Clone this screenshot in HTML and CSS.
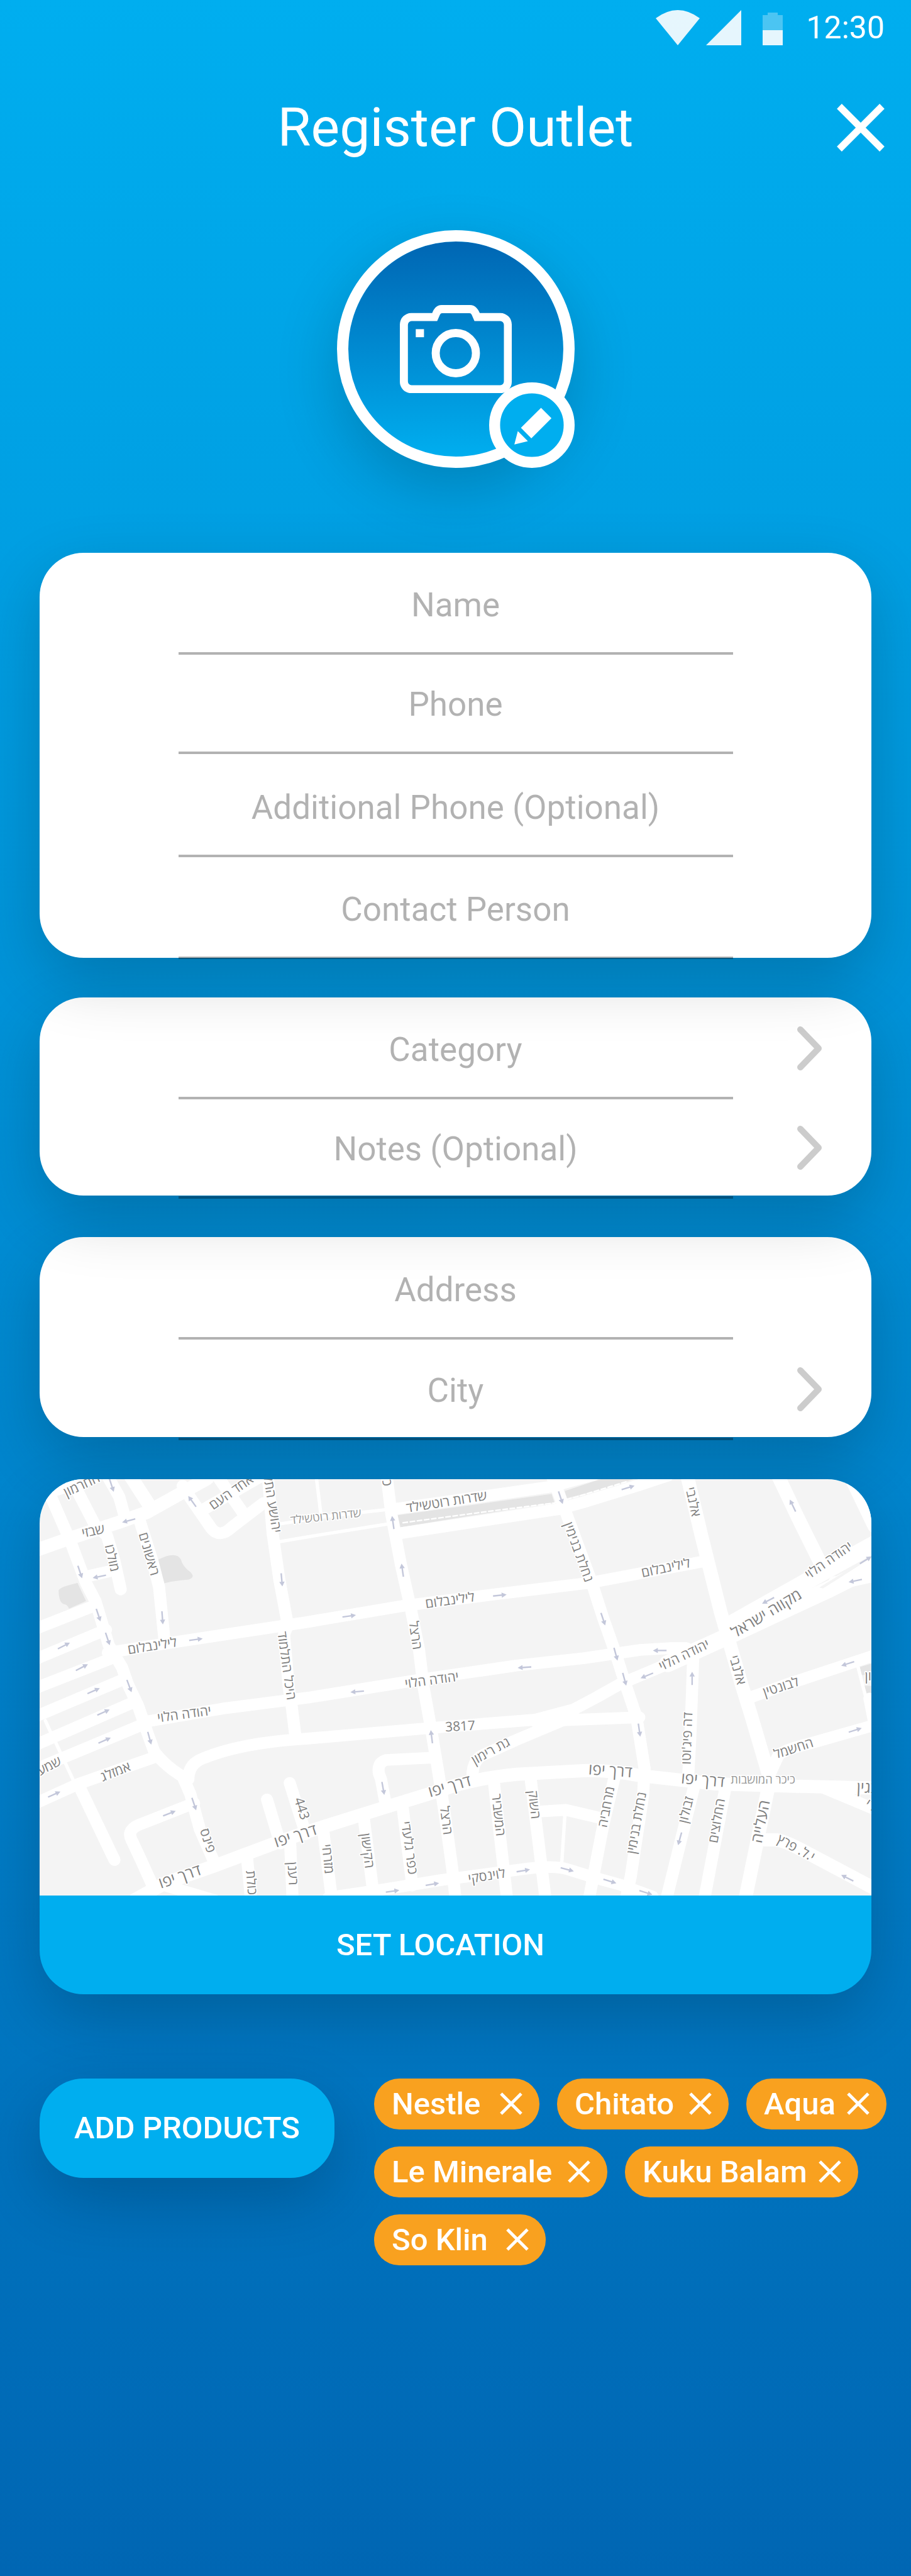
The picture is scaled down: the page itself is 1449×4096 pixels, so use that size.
FILE: index.html
```html
<!DOCTYPE html>
<html lang="en">
<head>
<meta charset="utf-8">
<meta name="viewport" content="width=device-width, initial-scale=1">
<title>Register Outlet</title>
<link rel="stylesheet" href="styles.css">
</head>
<body>
<div class="screen">
  <div class="status-bar">
    <svg class="status-wifi" viewBox="0 0 70 56" aria-hidden="true"><path d="M0 13Q35 -13 70 13L35 56Z"/></svg>
    <svg class="status-signal" viewBox="0 0 56 56" aria-hidden="true"><path d="M56 0V56H0Z"/></svg>
    <svg class="status-battery" viewBox="0 0 32 52" aria-hidden="true"><path opacity=".33" d="M8 0H24V4H32V28H0V4H8Z"/><path d="M0 28H32V52H0Z"/></svg>
    <time class="status-time">12:30</time>
  </div>

  <header class="header">
    <h1 class="title">Register Outlet</h1>
    <button class="close" type="button" aria-label="Close"><svg viewBox="0 0 78 78" aria-hidden="true"><path d="M5 5L73 73M73 5L5 73"/></svg></button>
  </header>

  <form class="form">
    <button class="avatar" type="button" aria-label="Change outlet photo">
      <svg class="avatar-camera" viewBox="384 460 612 482" aria-hidden="true">
        <path fill-rule="evenodd" d="M446 504H561C570 480 585 460 612 460H768C795 460 812 482 821 504H934A62 62 0 0 1 996 566V880A62 62 0 0 1 934 942H446A62 62 0 0 1 384 880V566A62 62 0 0 1 446 504ZM448 548A20 20 0 0 0 428 568V878A20 20 0 0 0 448 898H933A20 20 0 0 0 953 878V568A20 20 0 0 0 933 548H792L777 513Q773 505 765 505H615Q607 505 603 513L588 548Z"/>
        <path d="M471 592H516V636H471Z"/>
        <circle cx="690" cy="723" r="110"/>
      </svg>
      <svg class="avatar-badge" viewBox="870 882 468 468" aria-hidden="true">
        <circle cx="1104" cy="1116" r="204"/>
        <path d="M1154 1021L1211 1078L1101 1188L1044 1131ZM1027 1149L1082 1204L1008 1222Z"/>
      </svg>
    </button>

    <section class="card card-contact">
      <input class="field" type="text" placeholder="Name" aria-label="Name">
      <input class="field" type="tel" placeholder="Phone" aria-label="Phone">
      <input class="field" type="tel" placeholder="Additional Phone (Optional)" aria-label="Additional Phone (Optional)">
      <input class="field" type="text" placeholder="Contact Person" aria-label="Contact Person">
    </section>

    <section class="card card-details">
      <button class="picker" type="button"><span class="field">Category</span><svg class="chevron" viewBox="0 0 40 70" aria-hidden="true"><path d="M5 5L34 35L5 65"/></svg></button>
      <button class="picker" type="button"><span class="field">Notes (Optional)</span><svg class="chevron" viewBox="0 0 40 70" aria-hidden="true"><path d="M5 5L34 35L5 65"/></svg></button>
    </section>

    <section class="card card-address">
      <input class="field" type="text" placeholder="Address" aria-label="Address">
      <button class="picker" type="button"><span class="field">City</span><svg class="chevron" viewBox="0 0 40 70" aria-hidden="true"><path d="M5 5L34 35L5 65"/></svg></button>
    </section>

    <section class="card card-map">
      <svg class="map" viewBox="72 2688 1512 756" preserveAspectRatio="xMidYMid slice" role="img" aria-label="Street map">
        <defs>
          <g id="way"><path class="arrow-line" d="M-36 0H12"/><path class="arrow-head" d="M10 -14L36 0L10 14Z"/></g>
        </defs>
        <g transform="translate(60 2670) scale(.34439 .33333)">
          <!-- squares and gardens -->
          <g class="block">
            <path d="M655 495L700 475Q760 455 780 490Q790 530 830 560Q860 590 820 602Q760 605 690 622Z"/>
            <path d="M135 660Q145 640 235 620L280 718L190 760Q180 735 160 735Q135 720 135 660Z"/>
            <path d="M1925 250L2737 135L2752 180L1940 316ZM2807 118L2960 66L3010 50H3180L3020 105L2817 158Z"/>
            <path d="M4364 1078L4440 1055V1118L4375 1122ZM4384 1180H4440V1232H4404Z"/>
          </g>
          <!-- streets -->
          <g class="road">
            <path class="wide" d="M20 440L170 385L450 290L600 235L800 120L920 50"/>
            <path class="wide" d="M20 150L120 110L330 40"/>
            <path d="M95 150L200 400L280 620L330 720L400 960L470 1080L500 1170L555 1290L605 1440L640 1540Q700 1620 790 1675L830 1770L880 1960L960 2150"/>
            <path d="M235 120L330 310L390 360L430 500L463 655"/>
            <path d="M280 585L430 550"/>
            <path d="M395 40L455 150L485 260"/>
            <path class="wide" d="M510 30L610 190"/>
            <path d="M560 270L630 500L665 640L695 940"/>
            <path d="M790 90L830 155L940 320Q985 380 1050 315L1215 185"/>
            <path d="M890 225L1200 40"/>
            <path d="M975 40L1110 240"/>
            <path d="M1240 40L1265 350L1300 600L1345 850L1325 900L1350 1190L1365 1290L1385 1455"/>
            <path class="lane" d="M1495 40L1520 250"/>
            <path class="lane" d="M1290 300L1560 255L1880 218"/>
            <path class="lane" d="M1300 395L1452 368L1890 295"/>
            <path d="M395 1000L700 950L1452 832L1952 745L2452 680L2932 620L3524 505"/>
            <path d="M1867 40L1892 250L1942 520L1992 750L2037 980L2062 1190L2102 1420L2142 1670L2172 1870L2212 2170L2230 2340"/>
            <path d="M1900 218L2732 95L2960 30"/>
            <path d="M1942 348L2772 218L2904 180L3204 85L3350 35"/>
            <path class="dash" d="M1950 292L2400 230L2750 184L2870 150L3140 65"/>
            <path d="M2740 40L2800 200L2950 620L3009 810L3074 1000L3130 1180L3185 1350L3228 1630L3220 1780L3155 2220L3130 2340"/>
            <path d="M600 1375L1000 1305L1452 1245L2052 1145L2552 1070L2904 1030L3204 985L3364 975L3450 975"/>
            <path class="avenue" d="M4440 408L4180 555L3664 855"/>
            <path class="avenue" d="M4460 520L4200 655L3700 895L3350 1060"/>
            <path d="M3400 1040L3100 1170L2980 1240L2852 1310L2652 1365L2102 1410L1452 1468Q1100 1490 900 1575Q820 1605 820 1690"/>
            <path d="M2652 1375L2852 1366L3200 1352"/>
            <path d="M2852 1345L2552 1475L2370 1560Q2319 1590 2319 1680"/>
            <path d="M4440 582L4270 620L4230 615"/>
            <path class="wide" d="M3454 40L3530 370L3630 780L3680 960L3745 1190L3790 1340L3870 1620L3890 1700"/>
            <path class="wide" d="M3930 30L4040 270L4160 520"/>
            <path class="wide" d="M4310 30L4440 310"/>
            <path d="M3484 1040L3479 1200L3469 1470L3459 1660"/>
            <path d="M3492 1720L3344 2340"/>
            <path d="M3784 1245L4000 1165L4440 1015"/>
            <path class="lane" d="M4350 1060L4400 1260"/>
            <path d="M4415 1250L4440 1380"/>
            <path d="M3894 1650L3934 1560Q3960 1530 4100 1495L4440 1395"/>
            <path class="wide" d="M540 2345L700 2255L950 2165L1300 2030L1452 1975L1852 1845L2152 1750Q2300 1690 2552 1663L2904 1643Q3050 1640 3204 1670L3604 1715L3904 1725L4440 1738"/>
            <path d="M4180 1740L4440 1852"/>
            <path d="M20 867L320 745"/>
            <path d="M20 1032L385 875"/>
            <path d="M20 1190L430 1025"/>
            <path d="M20 1345L490 1140"/>
            <path d="M20 1500L530 1270"/>
            <path d="M20 1632L378 1478L570 1395"/>
            <path d="M20 1818L240 1715L640 1570"/>
            <path class="lane" d="M65 1370L100 1450M120 1490L215 1700"/>
            <path d="M245 1730L430 2130"/>
            <path d="M850 1820L580 1930Q490 1960 520 2020L570 2130L640 2290"/>
            <path d="M1355 1710L1440 1990"/>
            <path d="M1235 1800L1305 2040"/>
            <path d="M1130 2120L1150 2340"/>
            <path d="M1357 2030L1370 2340"/>
            <path d="M1532 1970L1577 2340"/>
            <path d="M1747 1910L1795 2300"/>
            <path d="M1952 1850L2002 2270"/>
            <path d="M2432 1700L2502 2340"/>
            <path d="M2627 1690L2705 2340"/>
            <path d="M3069 1680L3010 1940L2935 2340"/>
            <path d="M2682 1865L2812 1857L2990 1900"/>
            <path class="lane" d="M2807 1890L2790 2160"/>
            <path d="M1560 2335L1852 2290L2152 2240L2550 2185Q2740 2155 2820 2180L2960 2225L3100 2265L3270 2330"/>
            <path d="M3654 1740L3544 2340"/>
            <path class="wide" d="M3884 1720L3760 2340"/>
            <path class="wide" d="M3860 2020H3924Q3980 2030 4084 2090L4450 2290"/>
            <path d="M2110 1572L1862 1585Q1815 1600 1826 1660L1837 1690L1862 1830"/>
            <path d="M700 2270L960 2350"/>
          </g>
          <path class="median" d="M4150 645L4410 480V492L4170 650Z"/>
          <!-- one-way marks -->
          <g>
            <use href="#way" transform="translate(415 88) rotate(72)"/>
            <use href="#way" transform="translate(505 280) rotate(165)"/>
            <use href="#way" transform="translate(840 175) rotate(-125)"/>
            <use href="#way" transform="translate(248 560) rotate(72)"/>
            <use href="#way" transform="translate(350 585) rotate(168)"/>
            <use href="#way" transform="translate(345 795) rotate(72)"/>
            <use href="#way" transform="translate(394 925) rotate(72)"/>
            <use href="#way" transform="translate(683 810) rotate(86)"/>
            <use href="#way" transform="translate(1313 603) rotate(85)"/>
            <use href="#way" transform="translate(860 928) rotate(-8)"/>
            <use href="#way" transform="translate(163 962) rotate(-28)"/>
            <use href="#way" transform="translate(258 1080) rotate(-28)"/>
            <use href="#way" transform="translate(508 1182) rotate(70)"/>
            <use href="#way" transform="translate(1900 290) rotate(-98)"/>
            <use href="#way" transform="translate(1950 550) rotate(-98)"/>
            <use href="#way" transform="translate(1669 800) rotate(-8)"/>
            <use href="#way" transform="translate(2464 687) rotate(-6)"/>
            <use href="#way" transform="translate(2594 1080) rotate(176)"/>
            <use href="#way" transform="translate(2785 155) rotate(72)"/>
            <use href="#way" transform="translate(3009 817) rotate(72)"/>
            <use href="#way" transform="translate(3141 100) rotate(-18)"/>
            <use href="#way" transform="translate(4010 198) rotate(-115)"/>
            <use href="#way" transform="translate(3880 716) rotate(152)"/>
            <use href="#way" transform="translate(4395 495) rotate(-32)"/>
            <use href="#way" transform="translate(4340 608) rotate(168)"/>
            <use href="#way" transform="translate(3308 988) rotate(180)"/>
            <use href="#way" transform="translate(3076 1008) rotate(75)"/>
            <use href="#way" transform="translate(3122 1145) rotate(75)"/>
            <use href="#way" transform="translate(3240 1125) rotate(157)"/>
            <use href="#way" transform="translate(3479 1140) rotate(-90)"/>
            <use href="#way" transform="translate(4300 1060) rotate(162)"/>
            <use href="#way" transform="translate(320 1208) rotate(-25)"/>
            <use href="#way" transform="translate(372 1325) rotate(-25)"/>
            <use href="#way" transform="translate(378 1478) rotate(-25)"/>
            <use href="#way" transform="translate(615 1466) rotate(75)"/>
            <use href="#way" transform="translate(112 1772) rotate(-25)"/>
            <use href="#way" transform="translate(720 1876) rotate(-22)"/>
            <use href="#way" transform="translate(850 1825) rotate(72)"/>
            <use href="#way" transform="translate(1711 1212) rotate(175)"/>
            <use href="#way" transform="translate(2104 1458) rotate(-97)"/>
            <use href="#way" transform="translate(1848 1740) rotate(80)"/>
            <use href="#way" transform="translate(1898 2300) rotate(-8)"/>
            <use href="#way" transform="translate(2108 2262) rotate(-10)"/>
            <use href="#way" transform="translate(2588 2188) rotate(-10)"/>
            <use href="#way" transform="translate(2820 2182) rotate(15)"/>
            <use href="#way" transform="translate(3200 1422) rotate(82)"/>
            <use href="#way" transform="translate(4340 1422) rotate(-18)"/>
            <use href="#way" transform="translate(3414 2015) rotate(105)"/>
            <use href="#way" transform="translate(3045 2246) rotate(18)"/>
            <use href="#way" transform="translate(3235 2308) rotate(18)"/>
            <use href="#way" transform="translate(4298 2228) rotate(-153)"/>
          </g>
        </g>
        <!-- street names -->
        <g class="street" lang="he" transform="translate(60 2677)">
          <text transform="translate(92 29) rotate(-25)">החרמון</text>
          <text transform="translate(111 113) rotate(-12)">שבזי</text>
          <text transform="translate(136 156) rotate(77)">מולכו</text>
          <text transform="translate(203 149) rotate(74)">ראשונים</text>
          <text transform="translate(218 322) rotate(-9)">לילינבלום</text>
          <text transform="translate(365 41) rotate(-35)">אחד העם</text>
          <text transform="translate(427 57) rotate(81)">יהושע התל</text>
          <text class="minor" transform="translate(533 86) rotate(-6)">שדרות רוטשילד</text>
          <text transform="translate(453 351) rotate(82)">היכל התלמוד</text>
          <text transform="translate(753 60) rotate(-9)">שדרות רוטשילד</text>
          <text transform="translate(636 19) rotate(80)">כ</text>
          <text transform="translate(984 146) rotate(70)">נחלת בנימין</text>
          <text transform="translate(759 239) rotate(-8)">לילינבלום</text>
          <text transform="translate(687 296) rotate(82)">הרצל</text>
          <text transform="translate(726 384) rotate(-8)">יהודה הלוי</text>
          <text transform="translate(1192 54) rotate(78)">אלנבי</text>
          <text transform="translate(1152 180) rotate(-12)">לילינבלום</text>
          <text transform="translate(1451 165) rotate(-35)">יהודה הלוי</text>
          <text class="major" transform="translate(1338 263) rotate(-31)">מקווה ישראל</text>
          <text transform="translate(1187 338) rotate(-26)">יהודה הלוי</text>
          <text transform="translate(1273 360) rotate(74)">אלנבי</text>
          <text transform="translate(1362 396) rotate(-18)">לבונטין</text>
          <text transform="translate(1524 377) rotate(0)">רון</text>
          <text transform="translate(276 446) rotate(-8)">יהודה הלוי</text>
          <text transform="translate(28 542) rotate(-28)">שמעון</text>
          <text transform="translate(153 550) rotate(-22)">אמזלג</text>
          <text transform="translate(310 670) rotate(72)">פינס</text>
          <text class="major" transform="translate(270 742) rotate(-19)">דרך יפו</text>
          <text class="major" transform="translate(480 668) rotate(-18)">דרך יפו</text>
          <text transform="translate(481 612) rotate(72)">443</text>
          <text transform="translate(389 745) rotate(85)">כולת</text>
          <text transform="translate(464 728) rotate(87)">רענן</text>
          <text transform="translate(528 702) rotate(84)">מזרחי</text>
          <text transform="translate(777 468) rotate(-3)">3817</text>
          <text transform="translate(836 512) rotate(-29)">גת רימון</text>
          <text class="major" transform="translate(760 578) rotate(-16)">דרך יפו</text>
          <text transform="translate(743 632) rotate(83)">הרצל</text>
          <text transform="translate(838 622) rotate(84)">המשביר</text>
          <text transform="translate(903 603) rotate(84)">השוק</text>
          <text transform="translate(676 682) rotate(82)">כפר גלעדי</text>
          <text transform="translate(600 687) rotate(83)">הקישון</text>
          <text transform="translate(826 740) rotate(-9)">לוינסקי</text>
          <text class="major" transform="translate(1049 550) rotate(4)">דרך יפו</text>
          <text transform="translate(1197 482) rotate(-88)">דה פיג'וטו</text>
          <text transform="translate(1385 508) rotate(-18)">החשמל</text>
          <text class="major" transform="translate(1217 567) rotate(5)">דרך יפו</text>
          <text class="minor" transform="translate(1327 564) rotate(0)">כיכר המושבות</text>
          <text transform="translate(1050 608) rotate(-79)">מרחביה</text>
          <text transform="translate(1105 637) rotate(-80)">נחלת בנימין</text>
          <text transform="translate(1195 614) rotate(-76)">זבולון</text>
          <text transform="translate(1251 633) rotate(-80)">החלוצים</text>
          <text class="major" transform="translate(1332 635) rotate(-79)">העלייה</text>
          <text transform="translate(1383 688) rotate(29)">י.ל. פרץ</text>
          <text class="major" transform="translate(1517 581) rotate(2)">בגין</text>
          <text transform="translate(1530 617) rotate(32)">הררי</text>
        </g>
      </svg>
      <button class="set-location" type="button">SET LOCATION</button>
    </section>

    <section class="products">
      <button class="add-products" type="button">ADD PRODUCTS</button>
      <ul class="chips">
        <li class="chip chip-m">Nestle<button type="button" aria-label="Remove Nestle"><svg viewBox="0 0 36 36" aria-hidden="true"><path d="M2 2L34 34M34 2L2 34"/></svg></button></li>
        <li class="chip chip-l">Chitato<button type="button" aria-label="Remove Chitato"><svg viewBox="0 0 36 36" aria-hidden="true"><path d="M2 2L34 34M34 2L2 34"/></svg></button></li>
        <li class="chip chip-s">Aqua<button type="button" aria-label="Remove Aqua"><svg viewBox="0 0 36 36" aria-hidden="true"><path d="M2 2L34 34M34 2L2 34"/></svg></button></li>
        <li class="chip chip-xl">Le Minerale<button type="button" aria-label="Remove Le Minerale"><svg viewBox="0 0 36 36" aria-hidden="true"><path d="M2 2L34 34M34 2L2 34"/></svg></button></li>
        <li class="chip chip-xl">Kuku Balam<button type="button" aria-label="Remove Kuku Balam"><svg viewBox="0 0 36 36" aria-hidden="true"><path d="M2 2L34 34M34 2L2 34"/></svg></button></li>
        <li class="chip chip-l">So Klin<button type="button" aria-label="Remove So Klin"><svg viewBox="0 0 36 36" aria-hidden="true"><path d="M2 2L34 34M34 2L2 34"/></svg></button></li>
      </ul>
    </section>
  </form>
</div>
</body>
</html>
```
FILE: styles.css
```css
:root {
  --sky: #00aeef;
  --deep: #0066b3;
  --accent: #f9a11f;
  --muted: rgba(0, 0, 0, .3);
  --shadow: 0 35px 100px rgba(0, 0, 0, .19);
}

* {
  box-sizing: border-box;
}

body {
  margin: 0;
  font-family: Roboto, "Noto Sans", sans-serif;
  color: #fff;
}

button,
input {
  font: inherit;
  color: inherit;
  border: 0;
  padding: 0;
  margin: 0;
  background: none;
}

button {
  cursor: pointer;
}

svg {
  display: block;
}

.screen {
  min-height: 100vh;
  background: linear-gradient(var(--sky), var(--deep));
  overflow: hidden;
}

/* Status bar */
.status-bar {
  display: flex;
  justify-content: flex-end;
  align-items: flex-end;
  height: 72px;
  padding-right: 42px;
}

.status-bar svg {
  fill: #fff;
  opacity: .9;
}

.status-wifi {
  width: 70px;
  margin-right: 10px;
}

.status-signal {
  width: 56px;
  margin-right: 34px;
}

.status-battery {
  width: 32px;
  margin-right: 37px;
}

.status-time {
  font-size: 50px;
  line-height: 56px;
}

/* Header */
.header {
  display: grid;
  grid-template-columns: 1fr auto 1fr;
  align-items: center;
  height: 100px;
  margin-top: 81px;
  padding: 0 41px;
}

.title {
  grid-column: 2;
  margin: 0;
  font-size: 86px;
  font-weight: 400;
  line-height: 100px;
}

.close {
  justify-self: end;
}

.close svg {
  width: 78px;
  stroke: #fff;
  stroke-width: 11px;
}

/* Form */
.form {
  display: flex;
  flex-direction: column;
  padding: 113px 63px 0;
}

.avatar {
  position: relative;
  display: flex;
  align-items: center;
  justify-content: center;
  align-self: center;
  width: 378px;
  height: 378px;
  border: 18px solid #fff;
  border-radius: 50%;
  background: linear-gradient(var(--deep), var(--sky)) padding-box;
  box-shadow: var(--shadow);
}

.avatar-camera {
  width: 178px;
  fill: #fff;
}

.avatar-camera circle {
  fill: none;
  stroke: #fff;
  stroke-width: 44px;
}

.avatar-badge {
  position: absolute;
  right: -18px;
  bottom: -18px;
  width: 136px;
  fill: #fff;
}

.avatar-badge circle {
  fill: var(--sky);
  stroke: #fff;
  stroke-width: 60px;
}

.card {
  position: relative;
  display: grid;
  border-radius: 70px;
  background: #fff;
  box-shadow: var(--shadow);
  color: var(--muted);
}

.card-contact {
  z-index: 3;
  grid-template-rows: 162px 158px 164px 160px;
  margin-top: 135px;
}

.card-details {
  z-index: 2;
  grid-template-rows: 162px 153px;
  margin-top: 63px;
}

.card-address {
  z-index: 1;
  grid-template-rows: 163px 155px;
  margin-top: 66px;
}

.card-contact,
.card-details,
.card-address {
  grid-template-columns: 1fr 4fr 1fr;
  align-items: end;
}

.field {
  grid-column: 2;
  min-width: 0;
  height: 154px;
  border-bottom: 4px solid var(--muted);
  font-size: 53px;
  line-height: 150px;
  text-align: center;
  border-radius: 0;
  outline: 0;
}

.field::placeholder {
  color: var(--muted);
  opacity: 1;
}

.card-contact .field:last-child {
  margin-bottom: -2px;
}

.picker {
  grid-column: 1 / -1;
  display: grid;
  grid-template-columns: subgrid;
  align-items: center;
}

.picker:last-child {
  margin-bottom: -5px;
}

.chevron {
  justify-self: end;
  width: 40px;
  margin: 0 78px 8px 0;
  fill: none;
  stroke: #ccc;
  stroke-width: 10px;
  stroke-linecap: round;
  stroke-linejoin: round;
}

/* Map */
.card-map {
  z-index: 4;
  margin-top: 67px;
  overflow: hidden;
  background: var(--sky);
  color: #fff;
}

.map {
  width: 100%;
  background: #f4f4f4;
}

.block {
  fill: #e4e4e4;
}

.median {
  fill: #f4f4f4;
}

.road {
  fill: none;
  stroke: #fff;
  stroke-width: 64px;
  stroke-linecap: round;
  stroke-linejoin: round;
}

.road .wide {
  stroke-width: 72px;
}

.road .avenue {
  stroke-width: 92px;
}

.road .lane {
  stroke-width: 18px;
}

.road .dash {
  stroke-width: 8px;
  stroke-dasharray: 30 8;
  stroke-linecap: butt;
}

.arrow-line {
  stroke: #c3c7da;
  stroke-width: 8px;
}

.arrow-head {
  fill: #c3c7da;
}

.street {
  direction: rtl;
  font-family: "Open Sans", "Noto Sans", "DejaVu Sans", sans-serif;
  font-size: 24px;
  fill: #808080;
  stroke: #fff;
  stroke-width: 4px;
  paint-order: stroke;
  stroke-linejoin: round;
  text-anchor: middle;
}

.street .minor {
  font-size: 21px;
  fill: #989898;
}

.street .major {
  font-size: 28px;
}

.set-location {
  height: 157px;
  padding-right: 48px;
  font-size: 49px;
  font-weight: 500;
}

/* Products */
.products {
  display: flex;
  align-items: flex-start;
  gap: 63px;
  margin: 134px -25px 0 0;
}

.add-products {
  flex: none;
  width: 469px;
  height: 158px;
  border-radius: 70px;
  background: var(--sky);
  box-shadow: var(--shadow);
  font-size: 49px;
  font-weight: 500;
}

.chips {
  display: flex;
  flex-wrap: wrap;
  gap: 27px 28px;
  margin: 0;
  padding: 0;
  list-style: none;
}

.chip {
  display: flex;
  align-items: center;
  justify-content: space-between;
  height: 81px;
  padding: 0 27px 0 28px;
  border-radius: 40px;
  background: var(--accent);
  font-size: 49px;
  font-weight: 500;
}

.chip-s {
  width: 223px;
}

.chip-m {
  width: 263px;
}

.chip-l {
  width: 273px;
}

.chip-xl {
  width: 371px;
}

.chip svg {
  width: 36px;
  stroke: #fff;
  stroke-width: 5px;
}
```
